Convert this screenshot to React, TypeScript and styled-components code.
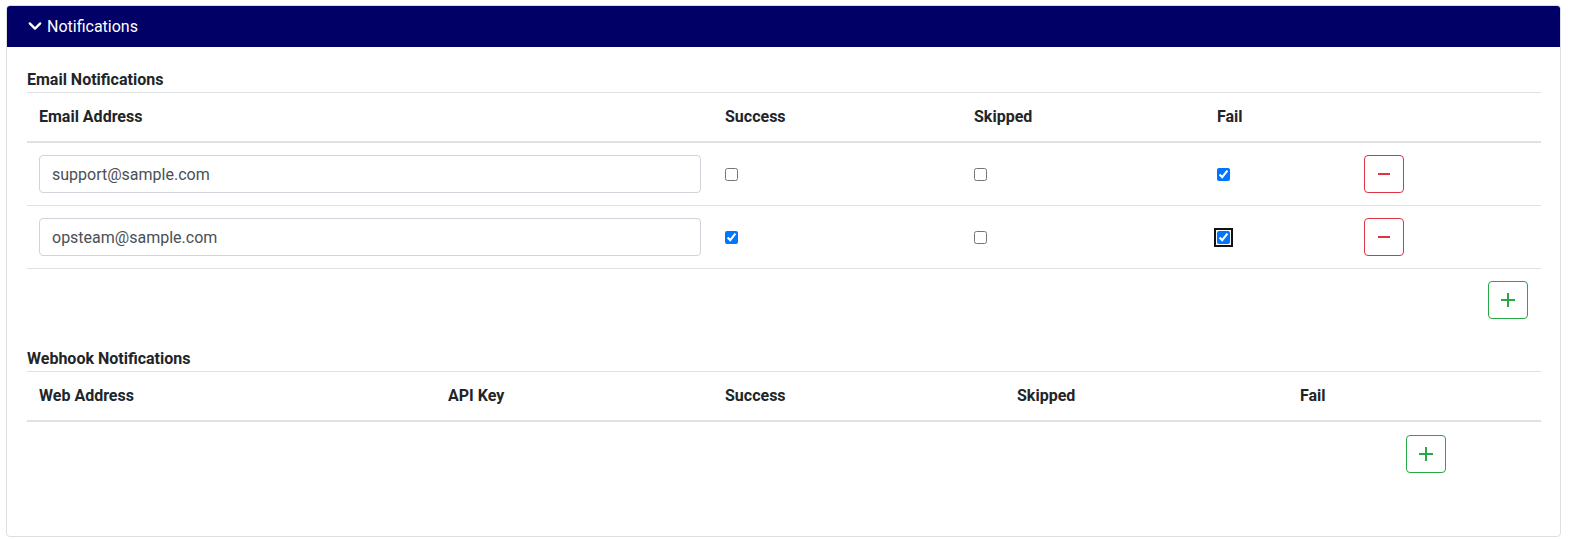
import React, { useState } from "react";
import styled, { createGlobalStyle } from "styled-components";

const GlobalStyle = createGlobalStyle`
    html, body {
        margin: 0;
        overflow: hidden;
    }
    body {
        background: #ffffff;
        font-family: Roboto, "Liberation Sans", Arial, sans-serif;
        color: #212529;
    }
`;

type EmailRow = { address: string; success: boolean; skipped: boolean; fail: boolean };

const initialEmails: EmailRow[] = [
    { address: "support@sample.com", success: false, skipped: false, fail: true },
    { address: "opsteam@sample.com", success: true, skipped: false, fail: true },
];

const emailCols = [
    { width: "686px", name: "Email Address" },
    { width: "249px", name: "Success" },
    { width: "243px", name: "Skipped" },
    { width: "147px", name: "Fail" },
    { width: "189px", name: "" },
];

const webhookCols = [
    { width: "409px", name: "Web Address" },
    { width: "277px", name: "API Key" },
    { width: "292px", name: "Success" },
    { width: "283px", name: "Skipped" },
    { width: "106px", name: "Fail" },
    { width: "147px", name: "" },
];

function Chevron() {
    return (
        <svg width="14" height="14" viewBox="0 0 16 16" fill="none">
            <path d="M2 5l6 6 6-6" stroke="#fff" strokeWidth="2.6" strokeLinecap="round" strokeLinejoin="round" />
        </svg>
    );
}

function MinusIcon() {
    return (
        <svg width="14" height="14" viewBox="0 0 14 14">
            <rect x="1" y="6" width="12" height="2" fill="#dc3545" />
        </svg>
    );
}

function PlusIcon() {
    return (
        <svg width="14" height="14" viewBox="0 0 14 14">
            <rect x="0" y="6" width="14" height="2" fill="#28a745" />
            <rect x="6" y="0" width="2" height="14" fill="#28a745" />
        </svg>
    );
}

export default function App() {
    const [emails, setEmails] = useState(initialEmails);

    const toggle = (idx: number, key: "success" | "skipped" | "fail") => {
        setEmails((pre) => pre.map((el, i) => (i === idx ? { ...el, [key]: !el[key] } : el)));
    };

    return (
        <Page>
            <GlobalStyle />
            <Card>
                <CardHeader>
                    <Chevron />
                    <span>Notifications</span>
                </CardHeader>
                <CardBody>
                    <SectionTitle>Email Notifications</SectionTitle>
                    <Table>
                        <colgroup>
                            {emailCols.map((el, idx) => (
                                <col key={idx} style={{ width: el.width }} />
                            ))}
                        </colgroup>
                        <thead>
                            <tr>
                                {emailCols.map((el, idx) => (
                                    <Th key={idx}>{el.name}</Th>
                                ))}
                            </tr>
                        </thead>
                        <tbody>
                            {emails.map((el, idx) => (
                                <BodyRow key={idx}>
                                    <Td>
                                        <TextInput
                                            value={el.address}
                                            onChange={(e) =>
                                                setEmails((pre) =>
                                                    pre.map((r, i) => (i === idx ? { ...r, address: e.target.value } : r))
                                                )
                                            }
                                        />
                                    </Td>
                                    <Td>
                                        <Check type="checkbox" checked={el.success} onChange={() => toggle(idx, "success")} />
                                    </Td>
                                    <Td>
                                        <Check type="checkbox" checked={el.skipped} onChange={() => toggle(idx, "skipped")} />
                                    </Td>
                                    <Td>
                                        <Check
                                            type="checkbox"
                                            checked={el.fail}
                                            $focused={idx === 1}
                                            onChange={() => toggle(idx, "fail")}
                                        />
                                    </Td>
                                    <Td>
                                        <IconButton $tone="#dc3545">
                                            <MinusIcon />
                                        </IconButton>
                                    </Td>
                                </BodyRow>
                            ))}
                        </tbody>
                    </Table>
                    <AddRow>
                        <IconButton $tone="#28a745">
                            <PlusIcon />
                        </IconButton>
                    </AddRow>

                    <WebhookTitle>Webhook Notifications</WebhookTitle>
                    <Table>
                        <colgroup>
                            {webhookCols.map((el, idx) => (
                                <col key={idx} style={{ width: el.width }} />
                            ))}
                        </colgroup>
                        <thead>
                            <tr>
                                {webhookCols.map((el, idx) => (
                                    <Th key={idx}>{el.name}</Th>
                                ))}
                            </tr>
                        </thead>
                        <tfoot>
                            <tr>
                                <FootTd colSpan={5} />
                                <FootTd>
                                    <IconButton $tone="#28a745">
                                        <PlusIcon />
                                    </IconButton>
                                </FootTd>
                            </tr>
                        </tfoot>
                    </Table>
                </CardBody>
            </Card>
        </Page>
    );
}

const Page = styled.div`
    padding: 5px 19px 0 6px;
`;

const Card = styled.div`
    border: 1px solid #dcdfe3;
    border-radius: 4px;
    background: #fff;
    overflow: hidden;
    height: 532px;
    box-sizing: border-box;
`;

const CardHeader = styled.div`
    display: flex;
    align-items: center;
    gap: 5px;
    height: 42px;
    padding: 0 0 0 22px;
    background: #000066;
    color: #fff;
    font-size: 16px;
    margin: -1px -1px 0 -1px;
`;

const CardBody = styled.div`
    padding: 21px 20px 0 20px;
`;

const SectionTitle = styled.div`
    font-size: 16px;
    font-weight: 700;
    line-height: 24px;
`;

const WebhookTitle = styled(SectionTitle)`
    margin-top: 28px;
`;

const Table = styled.table`
    width: 100%;
    border-collapse: collapse;
    table-layout: fixed;
`;

const Th = styled.th`
    text-align: left;
    font-size: 16px;
    font-weight: 700;
    line-height: 24px;
    padding: 12px;
    border-top: 1px solid #dee2e6;
    border-bottom: 2px solid #dee2e6;
`;

const BodyRow = styled.tr`
    border-bottom: 1px solid #dee2e6;
`;

const Td = styled.td`
    padding: 12px;
    border-top: 1px solid #dee2e6;
    vertical-align: middle;
`;

const FootTd = styled.td`
    padding: 13px 12px 12px;
`;

const TextInput = styled.input`
    display: block;
    width: 100%;
    height: 38px;
    box-sizing: border-box;
    padding: 6px 12px;
    font-family: Roboto, "Liberation Sans", Arial, sans-serif;
    font-size: 16px;
    color: #495057;
    border: 1px solid #ced4da;
    border-radius: 4px;
    outline: none;
`;

const Check = styled.input<{ $focused?: boolean }>`
    display: block;
    width: 13px;
    height: 13px;
    margin: 0;
    accent-color: #0075ff;
    outline: ${(p) => (p.$focused ? "2px solid #111" : "none")};
    outline-offset: 1px;
    border-radius: 2px;
`;

const IconButton = styled.button<{ $tone: string }>`
    display: flex;
    align-items: center;
    justify-content: center;
    width: 40px;
    height: 38px;
    padding: 0;
    background: #fff;
    border: 1px solid ${(p) => p.$tone};
    border-radius: 4px;
    cursor: pointer;
`;

const AddRow = styled.div`
    display: flex;
    justify-content: flex-end;
    padding: 12px 12px 0 0;
`;
